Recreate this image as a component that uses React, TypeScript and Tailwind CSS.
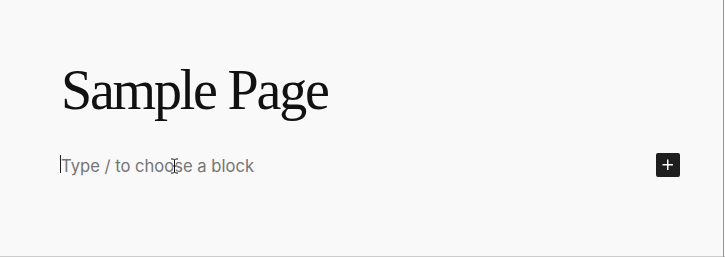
import React from "react";

export default function App() {
  return (
    <div className="flex h-[257px] w-[725px] bg-[#f9f9f9]">
      <div className="flex h-full w-[723px] shrink-0 flex-col border-b border-[#cccccc] bg-[#f9f9f9] pl-[61px] pr-[43px]">
        <h1 className="mt-[58px] h-[64px] font-['Liberation_Serif',serif] text-[56px] leading-[64px] tracking-[-2.2px] text-[#111111]">
          Sample Page
        </h1>
        <div className="mt-[31px] flex items-center justify-between">
          <div className="relative flex h-[24px] items-center">
            <span className="absolute left-[-1px] top-[2px] h-[18px] w-px bg-[#1e1e1e]" />
            <span className="mt-[2px] font-['Inter',sans-serif] text-[16.6px] leading-[24px] text-[#757575]">
              Type / to choose a block
            </span>
            <svg
              className="absolute left-[109px] top-[5px]"
              width="9"
              height="16"
              viewBox="0 0 9 16"
            >
              <path
                d="M1 1h2.5l1 1 1-1H8M4.5 2v12M1 15h2.5l1-1 1 1H8M2.5 8h4"
                fill="none"
                stroke="#ffffff"
                strokeWidth="2.5"
              />
              <path
                d="M1 1h2.5l1 1 1-1H8M4.5 2v12M1 15h2.5l1-1 1 1H8M2.5 8h4"
                fill="none"
                stroke="#111111"
                strokeWidth="1"
              />
            </svg>
          </div>
          <button className="flex h-[24px] w-[24px] items-center justify-center rounded-[2px] bg-[#1e1e1e]">
            <svg width="24" height="24" viewBox="0 0 24 24">
              <path d="M11 6.5h1.5V11H17v1.5h-4.5V17H11v-4.5H6.5V11H11z" fill="#ffffff" />
            </svg>
          </button>
        </div>
      </div>
      <div className="h-full w-px shrink-0 bg-[#00ff00]" />
      <div className="h-full w-px shrink-0 border-b border-[#cccccc] bg-[#f9f9f9]" />
    </div>
  );
}
